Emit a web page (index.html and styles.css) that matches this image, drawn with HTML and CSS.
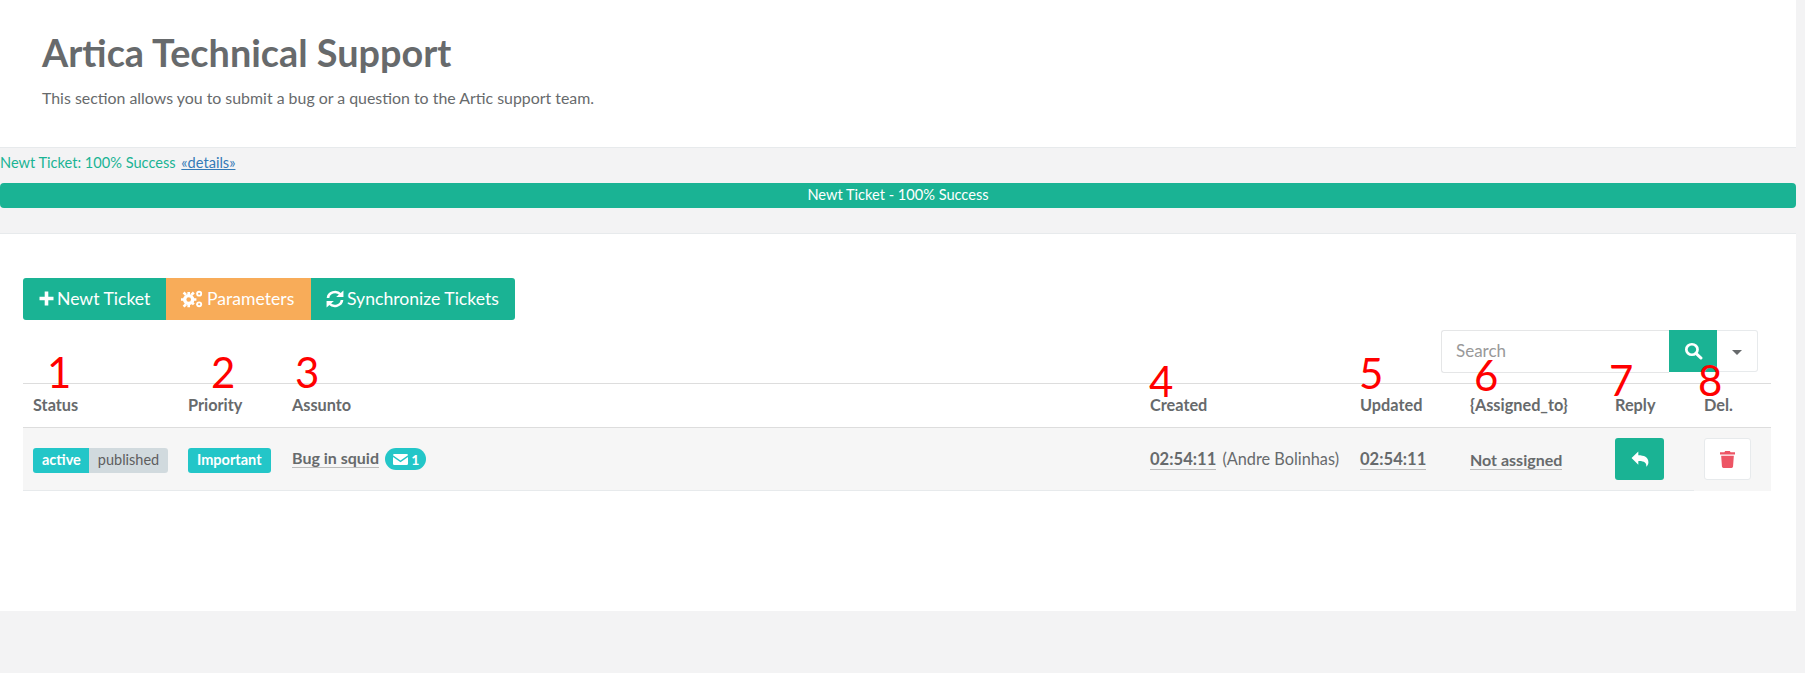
FILE: index.html
```html
<!DOCTYPE html>
<html lang="en">
<head>
<meta charset="utf-8">
<title>Artica Technical Support</title>
<link rel="stylesheet" href="styles.css">
</head>
<body>
<div class="wrap">
  <header class="head">
    <h1>Artica Technical Support</h1>
    <p>This section allows you to submit a bug or a question to the Artic support team.</p>
  </header>
  <section class="status">
    <div class="statusline">Newt Ticket: 100% Success <a href="#">«details»</a></div>
    <div class="bar">Newt Ticket - 100% Success</div>
  </section>
  <main class="panel">
    <div class="btns">
      <button class="btn green b1">
        <svg class="ic" width="15" height="15" viewBox="0 0 15 15"><path d="M5.700 0.500h3.600v5.200h5.200v3.600H9.300v5.200H5.700V9.300H0.500V5.700h5.200z" fill="#fff"/></svg>Newt Ticket</button>
      <button class="btn orange b2">
        <svg class="ic" width="22" height="18" viewBox="0 0 20 17" preserveAspectRatio="none"><g fill="#fff"><circle cx="7" cy="9" r="5.200"/><path d="M5.800 1.800h2.400v3h-2.400zM5.800 13.200h2.400v3h-2.400zM0 7.800h3v2.400H0zM11 7.800h3v2.400h-3zM1.500 3.200l1.700-1.700 2.200 2.200-1.700 1.700zM8.600 12.300l1.700-1.700 2.200 2.200-1.700 1.700zM1.500 14.800l2.200-2.200 1.700 1.700-2.200 2.200zM8.600 3.700l2.200-2.200 1.700 1.700-2.200 2.200z"/><circle cx="16.500" cy="3.500" r="2.700"/><circle cx="16.500" cy="13.500" r="2.700"/></g><circle cx="7" cy="9" r="2.100" fill="#f8ac59"/><circle cx="16.500" cy="3.500" r="1" fill="#f8ac59"/><circle cx="16.500" cy="13.500" r="1" fill="#f8ac59"/></svg>Parameters</button>
      <button class="btn green b3">
        <svg class="ic" width="18" height="18" viewBox="0 0 16 18" preserveAspectRatio="none"><g fill="none" stroke="#fff" stroke-width="2.400"><path d="M1.800 8A6.300 6.300 0 0 1 12.800 4.200"/><path d="M14.200 10A6.300 6.300 0 0 1 3.200 13.800"/></g><path d="M15.500 0.500v6.500h-6.500zM0.500 17.500v-6.500h6.500z" fill="#fff"/></svg>Synchronize Tickets</button>
    </div>
    <div class="tools">
      <div class="search">
        <input class="input" type="text" placeholder="Search">
        <button class="sbtn" aria-label="Search">
          <svg width="19" height="18" viewBox="0 0 18 18" preserveAspectRatio="none"><circle cx="7.500" cy="7.500" r="5.300" fill="none" stroke="#fff" stroke-width="2.600"/><path d="M11.500 11.500l4.500 4.500" stroke="#fff" stroke-width="3" stroke-linecap="round"/></svg>
        </button>
        <button class="caret" aria-label="More"><span class="tri"></span></button>
      </div>
    </div>
    <table class="grid">
      <thead>
        <tr>
          <th class="c1">Status</th>
          <th class="c2">Priority</th>
          <th class="c3">Assunto</th>
          <th class="c4">Created</th>
          <th class="c5">Updated</th>
          <th class="c6">{Assigned_to}</th>
          <th class="c7">Reply</th>
          <th class="c8">Del.</th>
        </tr>
      </thead>
      <tbody>
        <tr>
          <td><span class="lab teal join-l">active</span><span class="lab grey join-r">published</span></td>
          <td><span class="lab teal">Important</span></td>
          <td><span class="dot">Bug in squid</span> <span class="pill"><svg width="15" height="11" viewBox="0 0 15 11"><path d="M0 1.200Q0 0 1.300 0h12.400Q15 0 15 1.200L7.500 6.500zM0 3v6.800Q0 11 1.300 11h12.400Q15 11 15 9.800V3L7.500 8.300z" fill="#fff"/></svg> 1</span></td>
          <td><span class="dot time">02:54:11</span> <span class="who">(Andre Bolinhas)</span></td>
          <td><span class="dot time">02:54:11</span></td>
          <td><span class="dot">Not assigned</span></td>
          <td><button class="act green" aria-label="Reply"><svg width="18" height="16" viewBox="0 0 16 15" preserveAspectRatio="none"><path d="M6.500 0.500v3.500c5 0 9 1.800 9 6.500 0 2-1 3.500-2 4.200 0.600-3.400-1.800-5.400-7-5.200v3.500L0.500 6.500z" fill="#fff"/></svg></button></td>
          <td class="last"><button class="act white" aria-label="Delete"><svg width="15" height="17" viewBox="0 0 13 16" preserveAspectRatio="none"><path d="M4.500 0h4l0.700 1.200H13v2H0v-2h3.800zM1 4.500h11l-0.700 10.200q-0.100 1.300-1.300 1.300H3q-1.200 0-1.300-1.300z" fill="#ed5565"/></svg></button></td>
        </tr>
      </tbody>
    </table>
    <div class="nums" aria-hidden="true">
      <span class="n n1">1</span><span class="n n2">2</span><span class="n n3">3</span><span class="n n4">4</span><span class="n n5">5</span><span class="n n6">6</span><span class="n n7">7</span><span class="n n8">8</span>
    </div>
  </main>
</div>
</body>
</html>
```

FILE: styles.css
```css
* { box-sizing: border-box; }
html, body { margin: 0; padding: 0; }
body {
  background: #f3f3f4;
  height: 673px;
  overflow: hidden;
  font-family: Lato, "Open Sans", sans-serif;
  font-size: 16px;
  color: #676a6c;
}
.wrap { width: 1796px; }
.head {
  background: #fff;
  height: 148px;
  padding: 29px 0 0 42px;
  border-bottom: 1px solid #e7eaec;
}
.head h1 {
  margin: 0;
  font-size: 37.800px;
  line-height: 48px;
  font-weight: 700;
  color: #676a6c;
}
.head p {
  margin: 10px 0 0;
  font-size: 15.900px;
  line-height: 22px;
}
.status {
  height: 86px;
  border-bottom: 1px solid #e7eaec;
}
.statusline {
  height: 35px;
  padding-top: 6px;
  font-size: 14.600px;
  line-height: 18px;
  color: #1ab394;
  white-space: pre-wrap;
}
.statusline a { color: #337ab7; margin-left: 2px; text-decoration: underline; }
.bar {
  height: 25px;
  background: #1ab394;
  border-radius: 4px;
  color: #fff;
  font-size: 14.600px;
  line-height: 24px;
  text-align: center;
}
.panel {
  position: relative;
  background: #fff;
  height: 377px;
  padding: 44px 23px 0;
}
.btns { display: flex; height: 42px; }
.btn {
  height: 42px;
  border: 0;
  color: #fff;
  font-family: inherit;
  font-size: 17.600px;
  line-height: 40px;
  padding-bottom: 2px;
  display: flex;
  align-items: center;
  white-space: nowrap;
}
.b1 { width: 143px; padding-left: 16px; padding-right: 0; border-radius: 3px 0 0 3px; }
.b2 { width: 145px; padding-left: 15px; padding-right: 0; }
.b3 { width: 204px; padding-left: 15px; padding-right: 0; border-radius: 0 3px 3px 0; }
.b2 .ic { margin-right: 4px; }
.orange { background: #f8ac59; }
.green { background: #1ab394; }
.ic { margin-right: 3px; flex: none; }
.tools {
  display: flex;
  justify-content: flex-end;
  height: 63px;
  padding: 10px 15px 0 0;
}
.search { display: flex; height: 43px; }
.input {
  width: 228px;
  height: 43px;
  border: 1px solid #e5e6e7;
  border-right: 0;
  border-radius: 3px 0 0 3px;
  padding: 0 14px 3px;
  font-family: inherit;
  font-size: 17px;
  outline: 0;
}
.input::placeholder { color: #999; opacity: 1; }
.sbtn {
  width: 48px;
  height: 42px;
  border: 0;
  padding: 0;
  background: #1ab394;
  display: flex;
  align-items: center;
  justify-content: center;
}
.caret {
  width: 41px;
  height: 42px;
  border: 1px solid #e7eaec;
  border-left: 0;
  border-radius: 0 3px 3px 0;
  background: #fff;
  padding: 3px 0 0;
  display: flex;
  align-items: center;
  justify-content: center;
}
.tri {
  width: 0;
  height: 0;
  border-left: 5px solid transparent;
  border-right: 5px solid transparent;
  border-top: 5px solid #676a6c;
}
.grid {
  width: 1748px;
  border-collapse: collapse;
  table-layout: fixed;
  border-top: 1px solid #ddd;
}
.grid th {
  height: 44px;
  padding: 0 0 2px 10px;
  text-align: left;
  font-size: 16.300px;
  font-weight: 700;
  white-space: nowrap;
  border-bottom: 1px solid #ddd;
}
.grid td {
  height: 63px;
  padding: 0 0 0 10px;
  vertical-align: middle;
  background: #f6f6f6;
  border-bottom: 1px solid #e7eaec;
  white-space: nowrap;
}
.grid td.last { border-bottom-color: #f6f6f6; }
.c1 { width: 155px; }
.c2 { width: 104px; }
.c3 { width: 858px; }
.c4 { width: 210px; }
.c5 { width: 110px; }
.c6 { width: 145px; }
.c7 { width: 89px; }
.c8 { width: 77px; }
.lab {
  display: inline-block;
  height: 25px;
  padding: 0 9px;
  line-height: 24px;
  font-size: 14.500px;
  font-weight: 700;
  border-radius: 3px;
  vertical-align: middle;
  position: relative;
  top: 1px;
}
.teal { background: #23c6c8; color: #fff; }
.grey { background: #d1dade; color: #5e5e5e; font-weight: 400; }
.join-l { border-radius: 3px 0 0 3px; padding: 0 8px 0 9px; }
.join-r { border-radius: 0 3px 3px 0; }
.dot {
  font-weight: 700;
  border-bottom: 1px solid #bbb;
  font-size: 16px;
}
.time { font-size: 16.600px; }
.pill {
  display: inline-flex;
  align-items: center;
  gap: 3px;
  height: 22px;
  padding: 0 7px 0 8px;
  margin-left: 2px;
  border-radius: 11px;
  background: #23c6c8;
  color: #fff;
  font-weight: 700;
  font-size: 14px;
  vertical-align: middle;
}
.who { margin-left: 2px; font-size: 16.300px; }
.act {
  width: 49px;
  height: 42px;
  padding: 0;
  border-radius: 3px;
  display: flex;
  align-items: center;
  justify-content: center;
  border: 0;
}
.white { background: #fff; border: 1px solid #e7eaec; width: 47px; }
.nums { position: absolute; inset: 0; pointer-events: none; }
.n {
  position: absolute;
  top: 113px;
  font-family: Lato, sans-serif;
  font-size: 42px;
  line-height: 50px;
  color: #f00;
}
.n1 { left: 47px; }
.n2 { left: 211px; }
.n3 { left: 295px; }
.n4 { left: 1149px; top: 122px; }
.n5 { left: 1359px; top: 114px; }
.n6 { left: 1474px; top: 116px; }
.n7 { left: 1609px; top: 121px; }
.n8 { left: 1698px; top: 121px; }
```
